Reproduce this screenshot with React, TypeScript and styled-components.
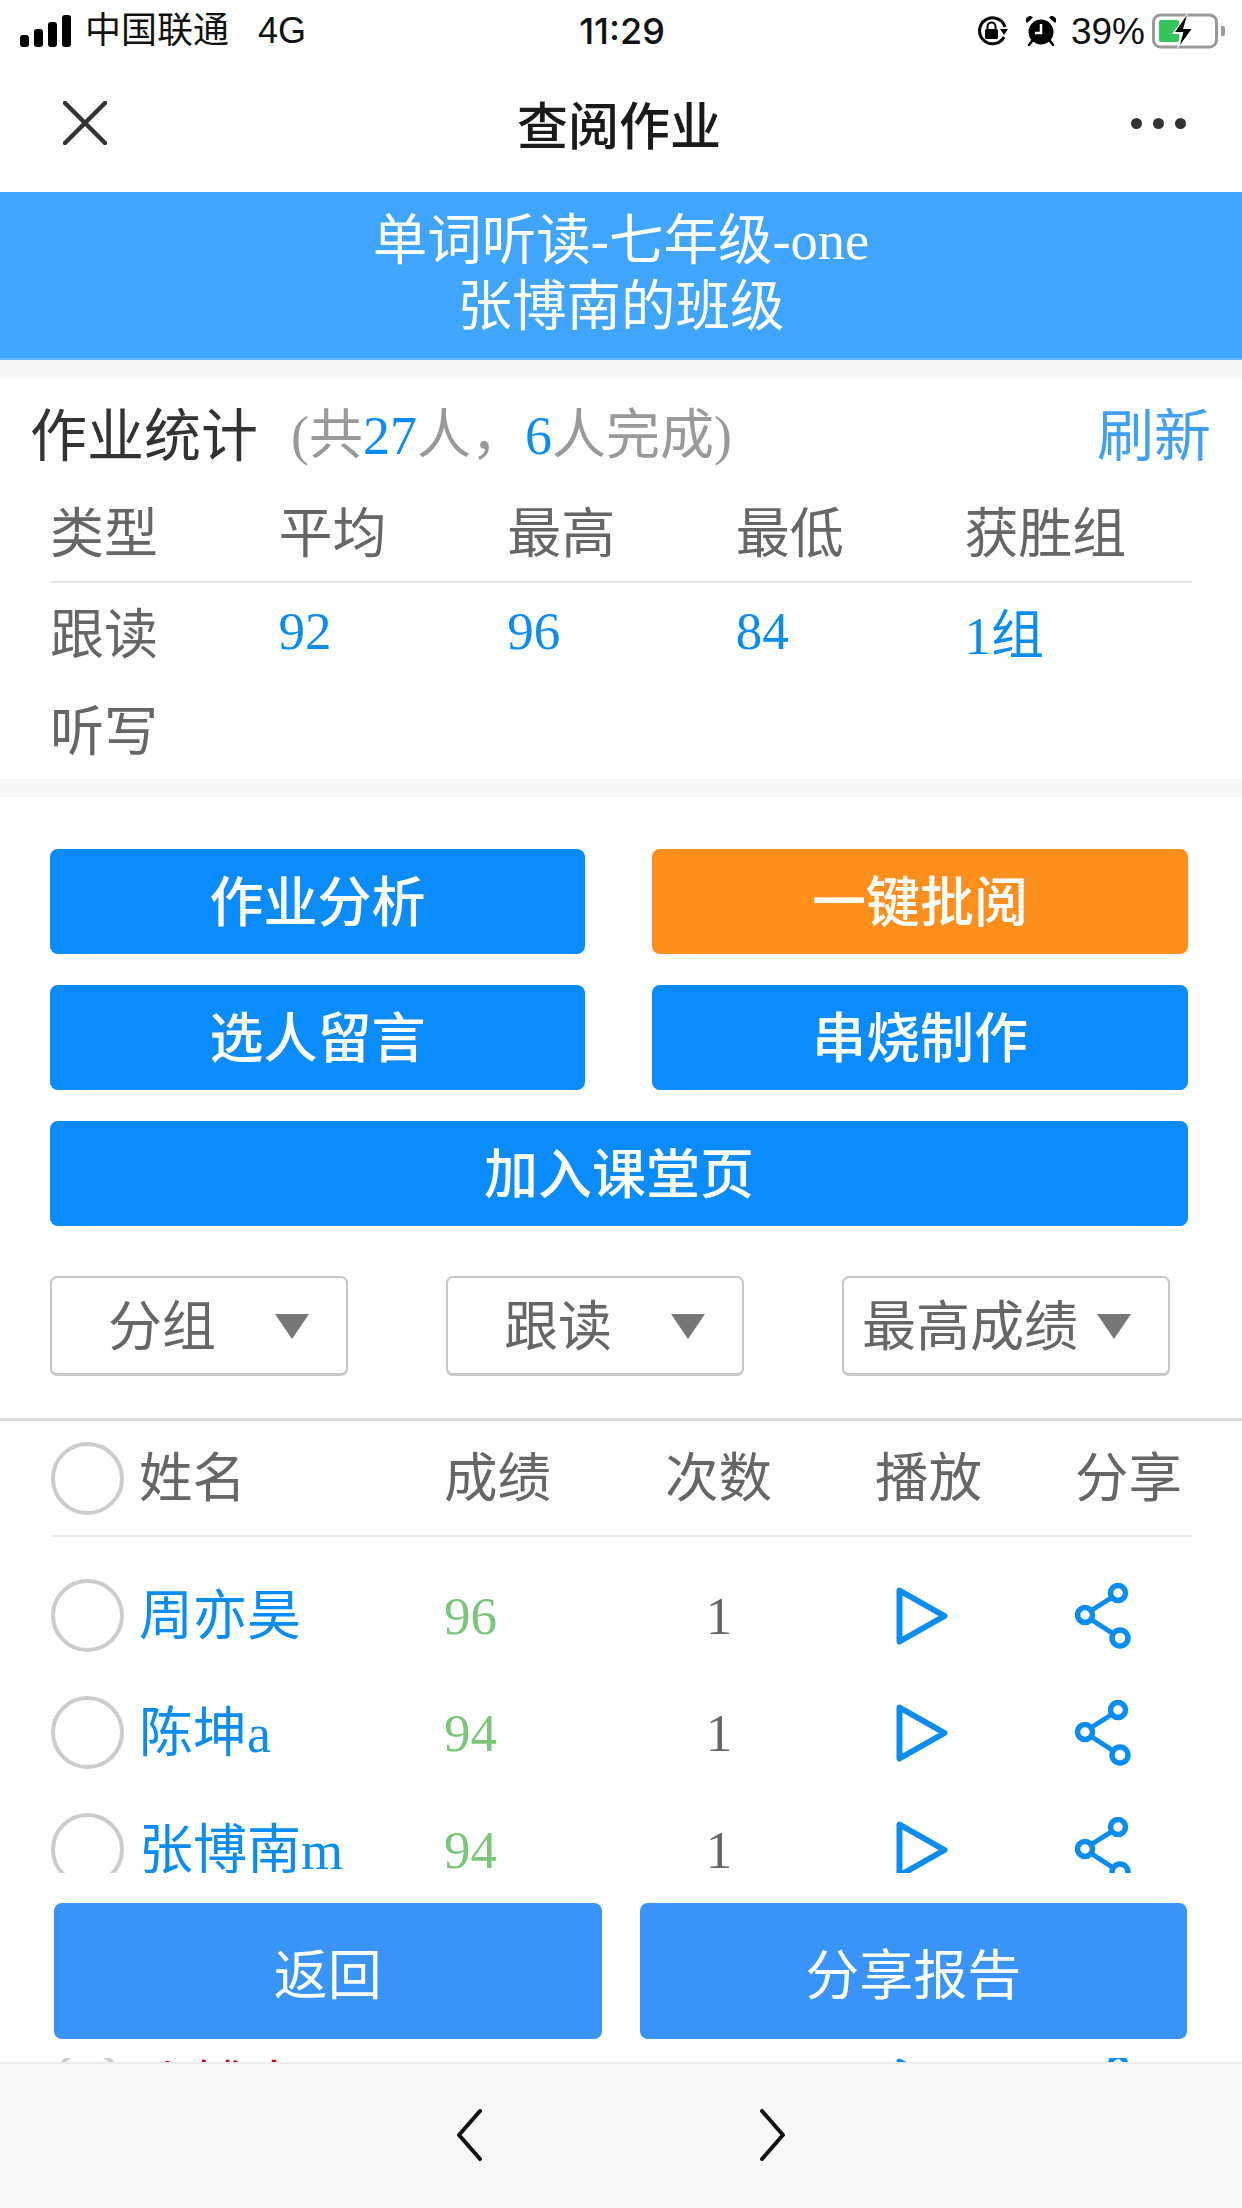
import React from 'react';
import styled, { createGlobalStyle } from 'styled-components';

const GlobalStyle = createGlobalStyle`
  html, body {
    margin: 0;
    padding: 0;
    background: #fff;
  }
  body {
    font-family: "Liberation Serif", "Noto Sans CJK SC", serif;
  }
  * {
    box-sizing: border-box;
  }
`;

const BLUE = '#0a8cf5';

const Page = styled.div`
  width: 1242px;
  height: 2208px;
  display: flex;
  flex-direction: column;
  overflow: hidden;
  background: #fff;
`;

const StatusBar = styled.div`
  height: 62px;
  padding: 0 16px 0 20px;
  display: grid;
  grid-template-columns: 1fr auto 1fr;
  align-items: center;
  font-family: "Liberation Sans", "Noto Sans CJK SC", sans-serif;
  font-size: 36px;
  color: #111;
`;

const StatusLeft = styled.div`
  display: flex;
  align-items: center;
`;

const Carrier = styled.span`
  margin-left: 13px;
  line-height: 1;
`;

const NetworkType = styled.span`
  margin-left: 29px;
  line-height: 1;
`;

const Clock = styled.div`
  margin-right: 2px;
  font-family: Inter, "Liberation Sans", sans-serif;
  font-weight: 500;
  font-size: 36px;
  line-height: 1;
`;

const StatusRight = styled.div`
  display: flex;
  align-items: center;
  justify-content: flex-end;
`;

const AlarmWrap = styled.span`
  display: flex;
  margin: 0 15px 0 17px;
`;

const BatteryText = styled.span`
  margin-right: 7px;
  font-size: 37px;
  line-height: 1;
`;

const NavBar = styled.div`
  height: 130px;
  padding: 0 67px 8px 63px;
  display: grid;
  grid-template-columns: 1fr auto 1fr;
  align-items: center;
  font-family: "Liberation Sans", "Noto Sans CJK SC", sans-serif;
`;

const NavTitle = styled.div`
  font-size: 51px;
  font-weight: 500;
  color: #1a1a1a;
`;

const NavMore = styled.div`
  justify-self: end;
  margin-right: -11px;
  display: flex;
  gap: 11px;
`;

const Dot = styled.span`
  width: 11px;
  height: 11px;
  border-radius: 50%;
  background: #333;
`;

const Banner = styled.div`
  height: 168px;
  padding-top: 16px;
  background: #3fa5ff;
  border-bottom: 2px solid #66b8ff;
  color: #fff;
  text-align: center;
  font-size: 54.5px;
  line-height: 66px;
`;

const Main = styled.div`
  position: relative;
  flex: 1;
  min-height: 0;
  overflow: hidden;
  background: #fff;
`;

const GrayGap = styled.div`
  height: 18px;
  background: #f6f6f6;
`;

const StatsCard = styled.section`
  padding: 0 50px;
`;

const StatsHeader = styled.div`
  height: 105px;
  margin: 0 -19px 0 -20px;
  display: flex;
  align-items: center;
`;

const StatsTitle = styled.span`
  font-size: 57px;
  color: #333;
`;

const StatsSummary = styled.span`
  margin-left: 33px;
  font-size: 54px;
  color: #999;
`;

const Highlight = styled.span`
  color: ${BLUE};
`;

const Refresh = styled.span`
  margin-left: auto;
  font-size: 57px;
  color: #3fa0f5;
`;

const StatsRow = styled.div<{ $head?: boolean; $pad: number }>`
  height: ${({ $head }) => ($head ? '100px' : '98px')};
  padding-bottom: ${({ $pad }) => $pad}px;
  display: grid;
  grid-template-columns: repeat(5, 228.6px);
  align-items: center;
  font-size: 54px;
  color: #666;
  border-bottom: ${({ $head }) => ($head ? '2px solid #e6e6e6' : '0')};
`;

const StatsValue = styled.span`
  font-size: 53px;
  color: ${BLUE};
`;

const Actions = styled.div`
  padding: 52px 54px 0 50px;
  display: grid;
  grid-template-columns: 535px 536px;
  column-gap: 67px;
  row-gap: 31px;
`;

const ActionButton = styled.div<{ $orange?: boolean; $wide?: boolean }>`
  height: 105px;
  padding-bottom: 7px;
  display: flex;
  align-items: center;
  justify-content: center;
  grid-column: ${({ $wide }) => ($wide ? '1 / -1' : 'auto')};
  border-radius: 8px;
  background: ${({ $orange }) => ($orange ? '#ff8f1c' : '#0a8cff')};
  color: #fff;
  font-size: 54px;
  font-weight: 500;
`;

const Filters = styled.div`
  margin-top: 50px;
  padding: 0 0 42px 50px;
  display: flex;
  gap: 98px;
  border-bottom: 3px solid #ddd;
`;

const Select = styled.div<{ $width: number; $textLeft: number }>`
  position: relative;
  width: ${({ $width }) => $width}px;
  height: 100px;
  padding: 0 0 6px ${({ $textLeft }) => $textLeft}px;
  display: flex;
  align-items: center;
  border: 2px solid #c8c8c8;
  border-bottom-width: 3px;
  border-radius: 7px;
  font-size: 54px;
  color: #666;
`;

const Caret = styled.span`
  position: absolute;
  right: 37px;
  top: 36px;
  width: 0;
  height: 0;
  border-left: 17px solid transparent;
  border-right: 17px solid transparent;
  border-top: 25px solid #777;
`;

const List = styled.div`
  padding: 0 50px 0 51px;
`;

const columns = '393px 221px 210px 200px 117px';

const ListHeader = styled.div`
  height: 116px;
  display: grid;
  grid-template-columns: ${columns};
  align-items: center;
  font-size: 53.5px;
  color: #666;
  border-bottom: 2px solid #eee;
  margin-bottom: 20px;
`;

const HeaderLabel = styled.span`
  display: block;
  padding-bottom: 9px;
`;

const Row = styled.div<{ $gap?: boolean }>`
  height: ${({ $gap }) => ($gap ? '120px' : '117px')};
  display: grid;
  grid-template-columns: ${columns};
  align-items: center;
  font-size: 53px;
`;

const NameCell = styled.div`
  display: flex;
  align-items: center;
  gap: 15px;
`;

const Check = styled.span`
  width: 73px;
  height: 73px;
  border-radius: 50%;
  border: 4.5px solid #ccc;
  flex-shrink: 0;
`;

const Name = styled.span<{ $late?: boolean }>`
  display: block;
  padding-bottom: 8px;
  font-size: 54px;
  color: ${({ $late }) => ($late ? '#d0021b' : BLUE)};
`;

const Score = styled.span`
  color: #7ac77a;
`;

const NoScore = styled.span`
  display: block;
  margin-left: 119px;
  padding-bottom: 8px;
  color: #777;
`;

const Count = styled.span`
  width: 108px;
  text-align: center;
  color: #666;
`;

const PlayCell = styled.div`
  display: flex;
  padding-left: 21px;
`;

const ShareCell = styled.div`
  display: flex;
`;

const FloatingBar = styled.div`
  position: absolute;
  left: 0;
  right: 0;
  bottom: 4px;
  height: 185px;
  padding: 30px 55px 0 54px;
  display: flex;
  gap: 38px;
  align-items: flex-start;
  background: #fff;
`;

const FloatingButton = styled.div`
  flex: 1;
  height: 136px;
  display: flex;
  align-items: center;
  justify-content: center;
  border-radius: 8px;
  background: #3894f9;
  color: #fff;
  font-size: 54px;
`;

const BottomBar = styled.div`
  height: 146px;
  flex-shrink: 0;
  display: flex;
  align-items: center;
  justify-content: center;
  gap: 278px;
  padding-bottom: 2px;
  background: #f8f8f8;
  border-top: 2px solid #ececec;
`;

const SignalIcon = () => (
  <svg width="52" height="32" viewBox="0 0 52 32" fill="#000">
    <rect x="0" y="20" width="9" height="12" rx="3" />
    <rect x="14" y="14" width="9" height="18" rx="3" />
    <rect x="28" y="7" width="9" height="25" rx="3" />
    <rect x="42" y="0" width="9" height="32" rx="3" />
  </svg>
);

const RotationLockIcon = () => (
  <svg width="33" height="30" viewBox="0 0 33 30">
    <path d="M29 11 A13 13 0 1 0 28 21" fill="none" stroke="#000" strokeWidth="3" />
    <path d="M24 13 L32 13 L28 19 Z" fill="#000" />
    <rect x="9" y="13" width="13" height="10" rx="1.5" fill="#000" />
    <path d="M11.5 13 V10.5 a4 4 0 0 1 8 0 V13" fill="none" stroke="#000" strokeWidth="2" />
  </svg>
);

const AlarmIcon = () => (
  <svg width="30" height="30" viewBox="0 0 30 30">
    <circle cx="15" cy="16" r="12.5" fill="#000" />
    <path d="M1 7 L7 1.5 A4 4 0 0 0 1 7 Z M29 7 L23 1.5 A4 4 0 0 1 29 7 Z" fill="#000" />
    <path d="M6 25 L3 29 M24 25 L27 29" stroke="#000" strokeWidth="2.5" strokeLinecap="round" />
    <path d="M15 8 V17 H9" fill="none" stroke="#fff" strokeWidth="2.5" />
  </svg>
);

const BatteryIcon = () => (
  <svg width="74" height="38" viewBox="0 0 74 38">
    <rect x="1.5" y="3" width="63" height="32" rx="7" fill="none" stroke="#999" strokeWidth="3" />
    <path d="M69 14 h2 a2 2 0 0 1 2 2 v6 a2 2 0 0 1 -2 2 h-2 Z" fill="#999" />
    <rect x="7" y="8" width="20" height="22" rx="2" fill="#35c55a" />
    <path d="M36 0 L20 22 H29 L25 37 L42 15 H33 Z" fill="#fff" />
    <path d="M35 3 L23 20 H31.5 L28 33 L39.5 17 H31 Z" fill="#000" />
  </svg>
);

const CloseIcon = () => (
  <svg width="44" height="44" viewBox="0 0 44 44">
    <path d="M2 2 L42 42 M42 2 L2 42" stroke="#333" strokeWidth="4.5" strokeLinecap="round" />
  </svg>
);

const PlayIcon = () => (
  <svg width="52" height="58" viewBox="0 0 52 58">
    <path d="M3.5 3.5 L48.5 29 L3.5 54.5 Z" fill="none" stroke={BLUE} strokeWidth="6" strokeLinejoin="round" />
  </svg>
);

const ShareIcon = () => (
  <svg width="57" height="66" viewBox="0 0 57 66">
    <path d="M17 27 L36 15 M17 37 L37 50" stroke={BLUE} strokeWidth="5" />
    <circle cx="43" cy="10" r="7.5" fill="none" stroke={BLUE} strokeWidth="5.5" />
    <circle cx="10" cy="32" r="7.5" fill="none" stroke={BLUE} strokeWidth="5.5" />
    <circle cx="45" cy="55" r="8" fill="none" stroke={BLUE} strokeWidth="5.5" />
  </svg>
);

const BackArrow = () => (
  <svg width="26" height="52" viewBox="0 0 26 52">
    <path d="M24 2 L3 26 L24 50" fill="none" stroke="#111" strokeWidth="4" strokeLinecap="round" strokeLinejoin="round" />
  </svg>
);

const ForwardArrow = () => (
  <svg width="26" height="52" viewBox="0 0 26 52">
    <path d="M2 2 L23 26 L2 50" fill="none" stroke="#111" strokeWidth="4" strokeLinecap="round" strokeLinejoin="round" />
  </svg>
);

const students = [
  { name: '周亦昊', score: '96', count: '1' },
  { name: '陈坤a', score: '94', count: '1' },
  { name: '张博南m', score: '94', count: '1' },
];

const App: React.FC = () => (
  <>
    <GlobalStyle />
    <Page>
      <StatusBar>
        <StatusLeft>
          <SignalIcon />
          <Carrier>中国联通</Carrier>
          <NetworkType>4G</NetworkType>
        </StatusLeft>
        <Clock>11:29</Clock>
        <StatusRight>
          <RotationLockIcon />
          <AlarmWrap>
            <AlarmIcon />
          </AlarmWrap>
          <BatteryText>39%</BatteryText>
          <BatteryIcon />
        </StatusRight>
      </StatusBar>

      <NavBar>
        <CloseIcon />
        <NavTitle>查阅作业</NavTitle>
        <NavMore>
          <Dot />
          <Dot />
          <Dot />
        </NavMore>
      </NavBar>

      <Banner>
        单词听读-七年级-one
        <br />
        张博南的班级
      </Banner>

      <Main>
        <GrayGap />
        <StatsCard>
          <StatsHeader>
            <StatsTitle>作业统计</StatsTitle>
            <StatsSummary>
              (共<Highlight>27</Highlight>人，<Highlight>6</Highlight>人完成)
            </StatsSummary>
            <Refresh>刷新</Refresh>
          </StatsHeader>
          <StatsRow $head $pad={6}>
            <span>类型</span>
            <span>平均</span>
            <span>最高</span>
            <span>最低</span>
            <span>获胜组</span>
          </StatsRow>
          <StatsRow $pad={3}>
            <span>跟读</span>
            <StatsValue>92</StatsValue>
            <StatsValue>96</StatsValue>
            <StatsValue>84</StatsValue>
            <StatsValue>1组</StatsValue>
          </StatsRow>
          <StatsRow $pad={5}>
            <span>听写</span>
          </StatsRow>
        </StatsCard>
        <GrayGap />

        <Actions>
          <ActionButton>作业分析</ActionButton>
          <ActionButton $orange>一键批阅</ActionButton>
          <ActionButton>选人留言</ActionButton>
          <ActionButton>串烧制作</ActionButton>
          <ActionButton $wide>加入课堂页</ActionButton>
        </Actions>

        <Filters>
          <Select $width={298} $textLeft={56}>
            分组
            <Caret />
          </Select>
          <Select $width={298} $textLeft={56}>
            跟读
            <Caret />
          </Select>
          <Select $width={328} $textLeft={18}>
            最高成绩
            <Caret />
          </Select>
        </Filters>

        <List>
          <ListHeader>
            <NameCell>
              <Check />
              <HeaderLabel>姓名</HeaderLabel>
            </NameCell>
            <HeaderLabel>成绩</HeaderLabel>
            <HeaderLabel>次数</HeaderLabel>
            <HeaderLabel>播放</HeaderLabel>
            <HeaderLabel>分享</HeaderLabel>
          </ListHeader>

          {students.map((student) => (
            <Row key={student.name}>
              <NameCell>
                <Check />
                <Name>{student.name}</Name>
              </NameCell>
              <Score>{student.score}</Score>
              <Count>{student.count}</Count>
              <PlayCell>
                <PlayIcon />
              </PlayCell>
              <ShareCell>
                <ShareIcon />
              </ShareCell>
            </Row>
          ))}
          <Row $gap />
          <Row>
            <NameCell>
              <Check />
              <Name $late>张博南</Name>
            </NameCell>
            <NoScore>无</NoScore>
            <span />
            <PlayCell>
              <PlayIcon />
            </PlayCell>
            <ShareCell>
              <ShareIcon />
            </ShareCell>
          </Row>
        </List>

        <FloatingBar>
          <FloatingButton>返回</FloatingButton>
          <FloatingButton>分享报告</FloatingButton>
        </FloatingBar>
      </Main>

      <BottomBar>
        <BackArrow />
        <ForwardArrow />
      </BottomBar>
    </Page>
  </>
);

export default App;
